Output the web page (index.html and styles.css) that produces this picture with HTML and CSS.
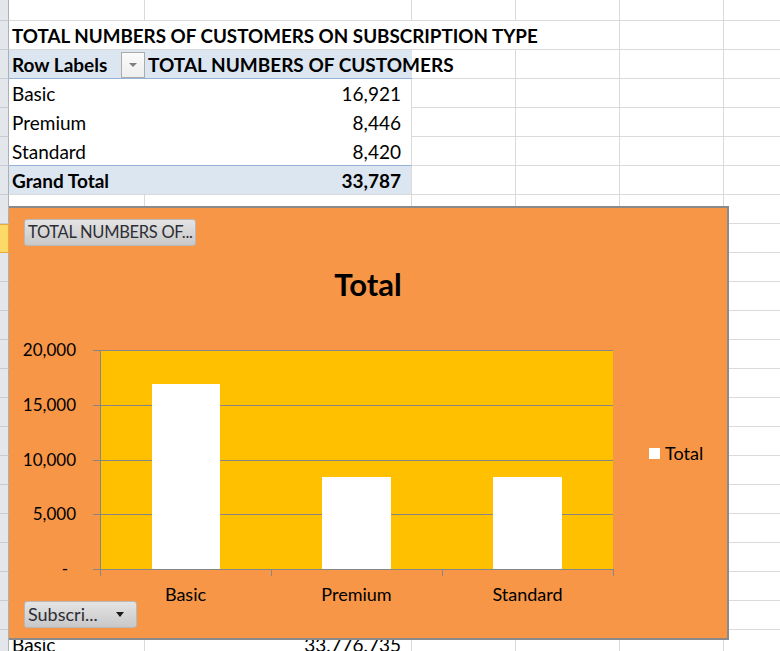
FILE: index.html
```html
<!DOCTYPE html>
<html>
<head>
<meta charset="utf-8">
<link rel="stylesheet" href="styles.css">
</head>
<body>
<div class="sheet">
  <div class="row r-first"><div class="rh"></div><div class="c a"></div><div class="c b"></div><div class="c cc"></div><div class="c d"></div><div class="c e"></div><div class="c f"></div></div>
  <div class="row"><div class="rh"></div><div class="c abcd bold title">TOTAL NUMBERS OF CUSTOMERS ON SUBSCRIPTION TYPE</div><div class="c e"></div><div class="c f"></div></div>
  <div class="row"><div class="rh"></div><div class="c a pv-head bold">Row Labels<span class="filter-btn"><span class="tri-gray"></span></span></div><div class="c b pv-head bold nob">TOTAL NUMBERS OF CUSTOMERS</div><div class="c cc"></div><div class="c d"></div><div class="c e"></div><div class="c f"></div></div>
  <div class="row"><div class="rh"></div><div class="c a pv">Basic</div><div class="c b pv num">16,921</div><div class="c cc"></div><div class="c d"></div><div class="c e"></div><div class="c f"></div></div>
  <div class="row"><div class="rh"></div><div class="c a pv">Premium</div><div class="c b pv num">8,446</div><div class="c cc"></div><div class="c d"></div><div class="c e"></div><div class="c f"></div></div>
  <div class="row"><div class="rh"></div><div class="c a pv pv-last">Standard</div><div class="c b pv pv-last num">8,420</div><div class="c cc"></div><div class="c d"></div><div class="c e"></div><div class="c f"></div></div>
  <div class="row"><div class="rh"></div><div class="c a pv-total bold">Grand Total</div><div class="c b pv-total bold num">33,787</div><div class="c cc"></div><div class="c d"></div><div class="c e"></div><div class="c f"></div></div>
  <div class="row"><div class="rh"></div><div class="c a"></div><div class="c b"></div><div class="c cc"></div><div class="c d"></div><div class="c e"></div><div class="c f"></div></div>
  <div class="row"><div class="rh sel"></div><div class="c a"></div><div class="c b"></div><div class="c cc"></div><div class="c d"></div><div class="c e"></div><div class="c f"></div></div>
  <div class="row"><div class="rh"></div><div class="c a"></div><div class="c b"></div><div class="c cc"></div><div class="c d"></div><div class="c e"></div><div class="c f"></div></div>
  <div class="row"><div class="rh"></div><div class="c a"></div><div class="c b"></div><div class="c cc"></div><div class="c d"></div><div class="c e"></div><div class="c f"></div></div>
  <div class="row"><div class="rh"></div><div class="c a"></div><div class="c b"></div><div class="c cc"></div><div class="c d"></div><div class="c e"></div><div class="c f"></div></div>
  <div class="row"><div class="rh"></div><div class="c a"></div><div class="c b"></div><div class="c cc"></div><div class="c d"></div><div class="c e"></div><div class="c f"></div></div>
  <div class="row"><div class="rh"></div><div class="c a"></div><div class="c b"></div><div class="c cc"></div><div class="c d"></div><div class="c e"></div><div class="c f"></div></div>
  <div class="row"><div class="rh"></div><div class="c a"></div><div class="c b"></div><div class="c cc"></div><div class="c d"></div><div class="c e"></div><div class="c f"></div></div>
  <div class="row"><div class="rh"></div><div class="c a"></div><div class="c b"></div><div class="c cc"></div><div class="c d"></div><div class="c e"></div><div class="c f"></div></div>
  <div class="row"><div class="rh"></div><div class="c a"></div><div class="c b"></div><div class="c cc"></div><div class="c d"></div><div class="c e"></div><div class="c f"></div></div>
  <div class="row"><div class="rh"></div><div class="c a"></div><div class="c b"></div><div class="c cc"></div><div class="c d"></div><div class="c e"></div><div class="c f"></div></div>
  <div class="row"><div class="rh"></div><div class="c a"></div><div class="c b"></div><div class="c cc"></div><div class="c d"></div><div class="c e"></div><div class="c f"></div></div>
  <div class="row"><div class="rh"></div><div class="c a"></div><div class="c b"></div><div class="c cc"></div><div class="c d"></div><div class="c e"></div><div class="c f"></div></div>
  <div class="row"><div class="rh"></div><div class="c a"></div><div class="c b"></div><div class="c cc"></div><div class="c d"></div><div class="c e"></div><div class="c f"></div></div>
  <div class="row"><div class="rh"></div><div class="c a"></div><div class="c b"></div><div class="c cc"></div><div class="c d"></div><div class="c e"></div><div class="c f"></div></div>
  <div class="row"><div class="rh"></div><div class="c a">Basic</div><div class="c b num">33,776,735</div><div class="c cc"></div><div class="c d"></div><div class="c e"></div><div class="c f"></div></div>
</div>

<div class="chart">
  <div class="chart-top"><div class="pbtn pbtn-field">TOTAL NUMBERS OF...</div></div>
  <div class="chart-title">Total</div>
  <div class="chart-main">
    <div class="yaxis">
      <span>20,000</span><span>15,000</span><span>10,000</span><span>5,000</span><span class="zero">-</span>
    </div>
    <svg class="plot" width="521" height="227" viewBox="0 0 521 227">
      <rect x="7" y="0" width="513" height="219" fill="#ffc000"/>
      <g stroke="#868686" stroke-width="1" shape-rendering="crispEdges">
        <line x1="0" y1="0.5" x2="520" y2="0.5"/>
        <line x1="0" y1="55.5" x2="520" y2="55.5"/>
        <line x1="0" y1="110.5" x2="520" y2="110.5"/>
        <line x1="0" y1="164.5" x2="520" y2="164.5"/>
      </g>
      <rect x="59" y="34" width="68" height="185" fill="#ffffff"/>
      <rect x="229" y="127" width="69" height="92" fill="#ffffff"/>
      <rect x="400" y="127" width="69" height="92" fill="#ffffff"/>
      <g stroke="#868686" stroke-width="1" shape-rendering="crispEdges">
        <line x1="7.5" y1="0" x2="7.5" y2="226"/>
        <line x1="0" y1="219.5" x2="520" y2="219.5"/>
        <line x1="178.5" y1="219" x2="178.5" y2="226"/>
        <line x1="349.5" y1="219" x2="349.5" y2="226"/>
        <line x1="520.5" y1="219" x2="520.5" y2="226"/>
      </g>
    </svg>
    <div class="legend"><span class="swatch"></span><span>Total</span></div>
  </div>
  <div class="cats"><span>Basic</span><span>Premium</span><span>Standard</span></div>
  <div class="chart-bottom"><div class="pbtn pbtn-axis">Subscri...<span class="tri-black"></span></div></div>
</div>
</body>
</html>
```

FILE: styles.css
```css
html, body {
  margin: 0;
  padding: 0;
  background: #ffffff;
  overflow: hidden;
}
body {
  width: 780px;
  height: 651px;
  position: relative;
  font-family: Lato, "Open Sans", sans-serif;
  color: #000;
}
.sheet {
  display: flex;
  flex-direction: column;
}
.row {
  display: flex;
  height: 29px;
  flex: none;
}
.row.r-first {
  height: 21px;
}
.rh {
  width: 8px;
  flex: none;
  background: #e3e6eb;
  border-right: 1px solid #a9b0b9;
  border-bottom: 1px solid #c8ccd2;
}
.rh.sel {
  background: #fdd968;
  border: 1px solid #eaa93a;
  border-left: none;
  width: 8px;
}
.c {
  flex: none;
  box-sizing: border-box;
  border-right: 1px solid #dadada;
  border-bottom: 1px solid #dadada;
  font-size: 19px;
  line-height: 28px;
  padding: 1px 3px 0 3px;
  white-space: nowrap;
  overflow: visible;
}
.a { width: 136px; display: flex; align-items: center; }
.b { width: 267px; }
.cc { width: 104px; }
.d { width: 104px; }
.e { width: 104px; }
.f { width: 60px; }
.abcd { width: 611px; border-right: 1px solid #dadada; }
.title { font-size: 18.8px; }
.bold { font-weight: 700; }
.num { text-align: right; padding-right: 10px; }

.pv-head {
  background: #dce6f1;
  border-bottom: 1px solid #95b3d7;
  border-right: none;
}
.b.pv-head { width: 267px; border-right: none; }
.pv {
  border-bottom: none;
  border-right: none;
  background: #fff;
}
.b.pv { border-right: 1px solid #dadada; }
.pv-last { border-bottom: 1px solid #95b3d7; }
.pv-total {
  background: #dce6f1;
  border-right: none;
}
.b.pv-total { border-right: 1px solid #dadada; }

.filter-btn {
  box-sizing: border-box;
  width: 24px;
  height: 26px;
  margin-left: auto;
  margin-right: -3px;
  border: 1px solid #acacac;
  background: linear-gradient(#fafafa, #eeeeee);
  display: flex;
  align-items: center;
  justify-content: center;
}
.tri-gray {
  width: 0;
  height: 0;
  border-left: 4px solid transparent;
  border-right: 4px solid transparent;
  border-top: 4px solid #7f7f7f;
}

/* chart overlay */
.chart {
  position: absolute;
  left: 9px;
  top: 206px;
  width: 720px;
  height: 434px;
  box-sizing: border-box;
  background: #f79646;
  border-top: 2px solid #8a8a8a;
  border-right: 2px solid #8a8a8a;
  border-bottom: 2px solid #8a8a8a;
  z-index: 2;
}
.chart-top {
  padding: 11px 0 0 15px;
  height: 27px;
}
.pbtn {
  box-sizing: border-box;
  height: 27px;
  border: 1px solid #b8b8b8;
  border-radius: 3px;
  background: linear-gradient(#e4e4e4, #c8c8c8);
  color: #2e2e36;
  font-size: 16.5px;
  line-height: 25px;
  padding-left: 3px;
  white-space: nowrap;
  overflow: hidden;
  display: flex;
  align-items: center;
}
.pbtn-field { width: 172px; letter-spacing: -0.3px; }
.pbtn-axis { width: 113px; font-size: 18px; }
.tri-black {
  margin-left: auto;
  margin-right: 12px;
  width: 0;
  height: 0;
  border-left: 4px solid transparent;
  border-right: 4px solid transparent;
  border-top: 5px solid #1a1a1a;
}
.chart-title {
  margin-top: 18px;
  text-align: center;
  font-weight: 700;
  font-size: 31px;
  line-height: 40px;
  height: 40px;
}
.chart-main {
  margin-top: 46px;
  display: grid;
  grid-template-columns: 84px 521px 1fr;
  height: 227px;
}
.yaxis {
  display: flex;
  flex-direction: column;
  justify-content: space-between;
  height: 241px;
  margin-top: -11px;
  padding-right: 17px;
  text-align: right;
  font-size: 17px;
  line-height: 22px;
}
.yaxis .zero { padding-right: 8px; }
.plot { display: block; }
.legend {
  display: flex;
  align-items: center;
  gap: 5px;
  margin-left: 35px;
  margin-top: 88px;
  height: 30px;
  font-size: 18px;
}
.swatch {
  width: 11px;
  height: 11px;
  background: #ffffff;
}
.cats {
  margin-top: 5px;
  margin-left: 91px;
  width: 513px;
  display: grid;
  grid-template-columns: repeat(3, 1fr);
  text-align: center;
  font-size: 18px;
  line-height: 24px;
  height: 19px;
}
.chart-bottom {
  padding-left: 15px;
}
```
